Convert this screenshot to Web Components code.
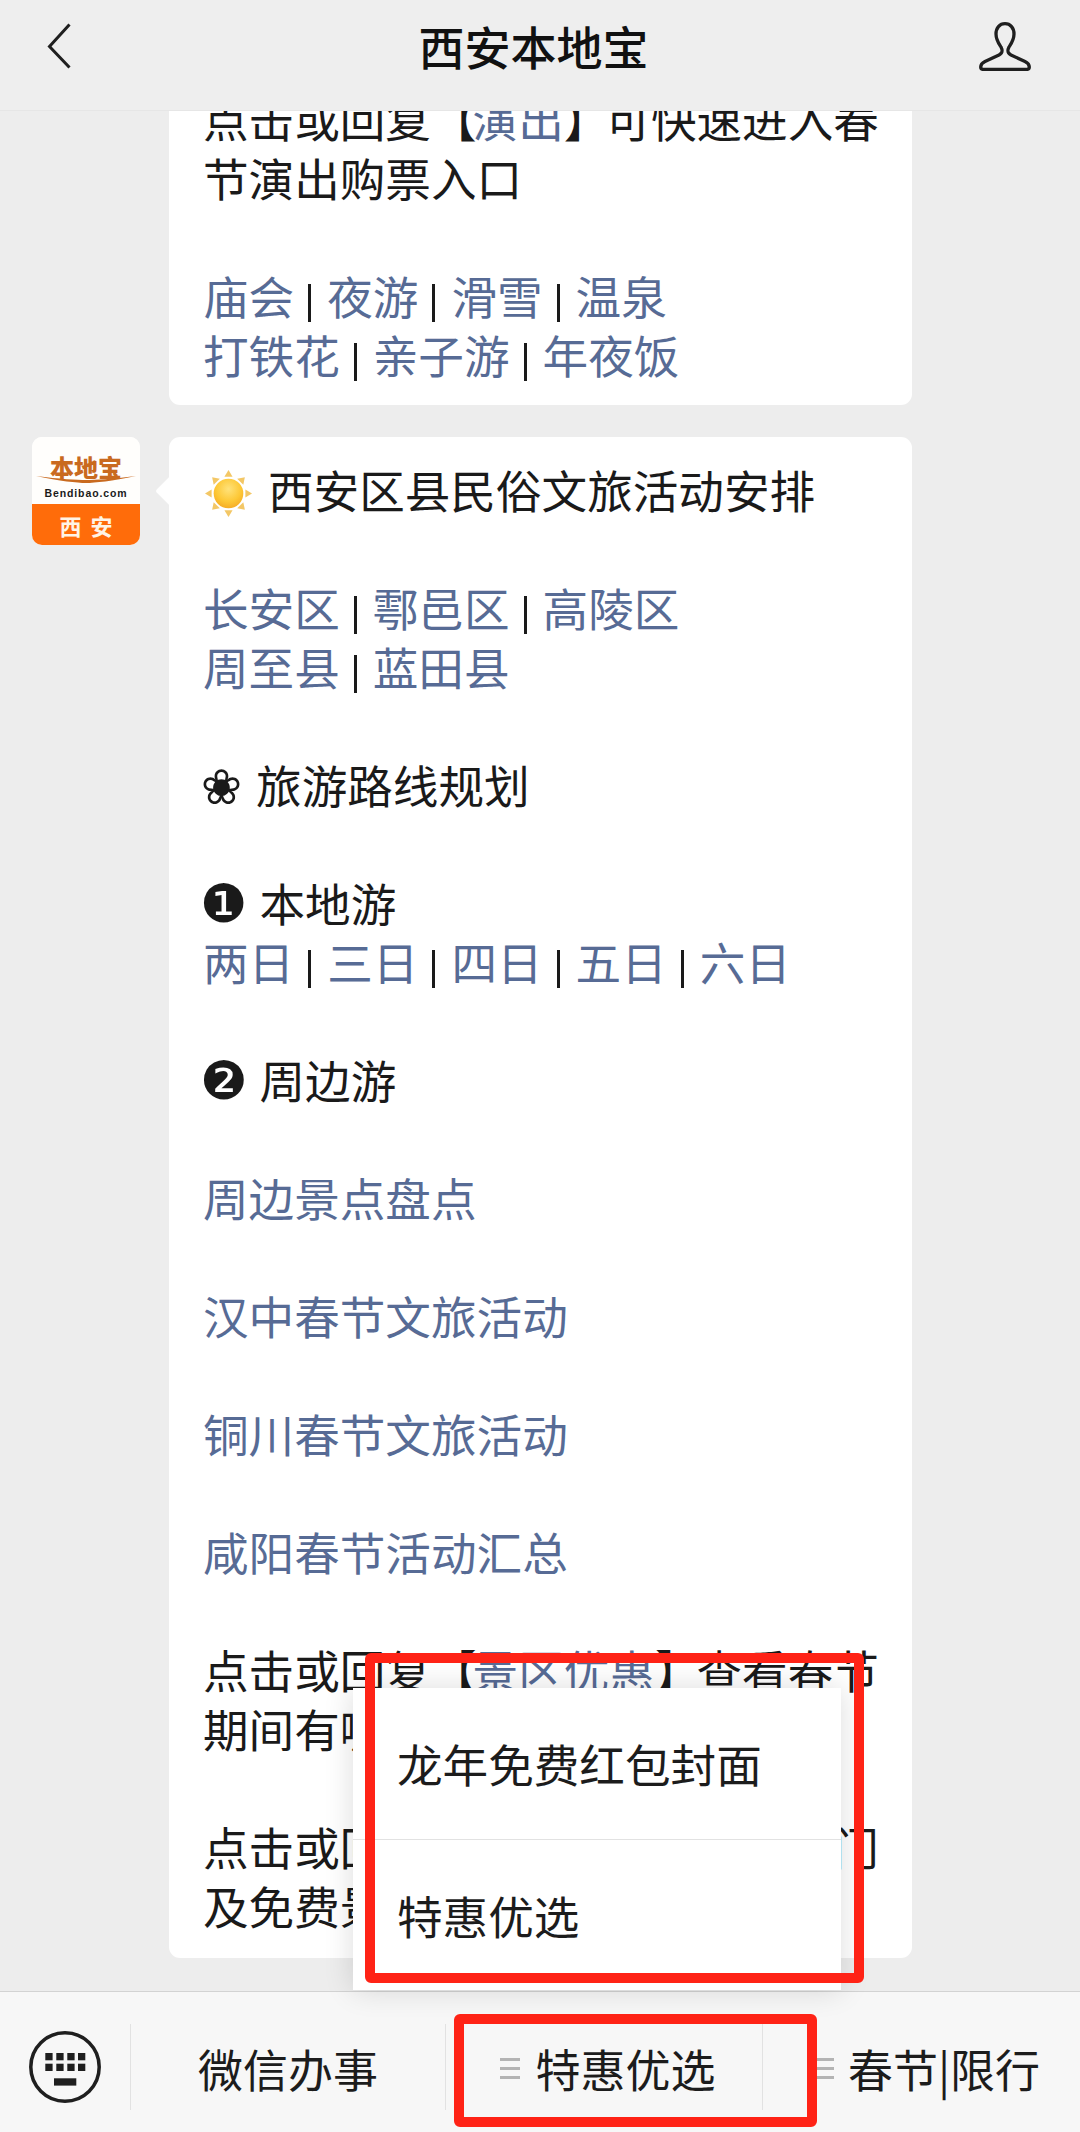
<!DOCTYPE html>
<html lang="zh"><head><meta charset="utf-8"><title>西安本地宝</title>
<style>
html,body{margin:0;padding:0;background:#ededed}
body{font-family:"Noto Sans CJK SC","Noto Sans",sans-serif;color:#1a1a1a}
</style></head><body>
<app-shell>
  <nav-bar slot="nav">西安本地宝</nav-bar>
  <chat-msg slot="chat" top>
    <msg-par>点击或回复<msg-punct>【</msg-punct><msg-link>演出</msg-link><msg-punct>】</msg-punct>可快速进入春节演出购票入口</msg-par>
    <msg-par><msg-link>庙会</msg-link><msg-pipe></msg-pipe><msg-link>夜游</msg-link><msg-pipe></msg-pipe><msg-link>滑雪</msg-link><msg-pipe></msg-pipe><msg-link>温泉</msg-link><br><msg-link>打铁花</msg-link><msg-pipe></msg-pipe><msg-link>亲子游</msg-link><msg-pipe></msg-pipe><msg-link>年夜饭</msg-link></msg-par>
  </chat-msg>
  <chat-msg slot="chat" avatar>
    <msg-par><sun-icon></sun-icon>西安区县民俗文旅活动安排</msg-par>
    <msg-par><msg-link>长安区</msg-link><msg-pipe></msg-pipe><msg-link>鄠邑区</msg-link><msg-pipe></msg-pipe><msg-link>高陵区</msg-link><br><msg-link>周至县</msg-link><msg-pipe></msg-pipe><msg-link>蓝田县</msg-link></msg-par>
    <msg-par><msg-glyph kind="flower">❀</msg-glyph>旅游路线规划</msg-par>
    <msg-par><msg-glyph>❶</msg-glyph>本地游<br><msg-link>两日</msg-link><msg-pipe></msg-pipe><msg-link>三日</msg-link><msg-pipe></msg-pipe><msg-link>四日</msg-link><msg-pipe></msg-pipe><msg-link>五日</msg-link><msg-pipe></msg-pipe><msg-link>六日</msg-link></msg-par>
    <msg-par><msg-glyph>❷</msg-glyph>周边游</msg-par>
    <msg-par><msg-link>周边景点盘点</msg-link></msg-par>
    <msg-par><msg-link>汉中春节文旅活动</msg-link></msg-par>
    <msg-par><msg-link>铜川春节文旅活动</msg-link></msg-par>
    <msg-par><msg-link>咸阳春节活动汇总</msg-link></msg-par>
    <msg-par>点击或回复<msg-punct>【</msg-punct><msg-link>景区优惠</msg-link><msg-punct>】</msg-punct>查看春节期间有哪些景区优惠</msg-par>
    <msg-par>点击或回复<msg-punct>【</msg-punct><msg-link>景区门票</msg-link><msg-punct>】</msg-punct>查询热门及免费景点</msg-par>
  </chat-msg>
  <composer-bar slot="bar"></composer-bar>
  <menu-popup slot="over"></menu-popup>
  <annot-box slot="over" style="left:365px;top:1653px;width:499px;height:330px"></annot-box>
  <annot-box slot="over" style="left:454px;top:2014px;width:363px;height:113px"></annot-box>
</app-shell>
<script>
function def(name, css, html, extra){
  customElements.define(name, class extends HTMLElement{
    constructor(){super();const r=this.attachShadow({mode:'open'});r.innerHTML='<style>'+css+'</style>'+html;}
    connectedCallback(){ if(extra) extra(this); }
  });
}
def('app-shell',
 `:host{display:block;position:relative;width:1080px;height:2132px;overflow:hidden;background:#ededed}
  .col{display:flex;flex-direction:column;height:100%}
  .chat{flex:1;min-height:0;overflow:hidden;display:flex;flex-direction:column;gap:32px}
  .nav{position:relative;z-index:2}`,
 `<div class="col"><div class="nav"><slot name="nav"></slot></div><div class="chat"><slot name="chat"></slot></div><slot name="bar"></slot></div><slot name="over"></slot>`);
def('nav-bar',
 `:host{display:flex;align-items:flex-start;justify-content:space-between;box-sizing:border-box;height:111px;padding:22px 49px 0 47px;background:#eeeeee;border-bottom:1px solid #e6e6e6}
  svg{display:block;flex:none}
  .t{font-size:46px;font-weight:500;line-height:46px;color:#111;margin:0 0 0 17px}`,
 `<svg width="24" height="48" viewBox="0 0 24 48" fill="none" stroke="#1f1f1f" stroke-width="3"><path d="M22.5 2.5 2.5 24.5l20 21"/></svg>
  <div class="t"><slot></slot></div>
  <svg width="52" height="49" viewBox="0 0 52 49" fill="none" stroke="#1f1f1f" stroke-width="3.3" stroke-linejoin="round"><path d="M26 1.700C20.500 1.700 17 6 17 12C17 18 20 22 22 25C24 29 23.500 31 20 33L6 39.500C3 41 1.700 43 1.700 45C1.700 47 3 47.500 5 47.500H47C49 47.500 50.300 47 50.300 45C50.300 43 49 41 46 39.500L32 33C28.500 31 28 29 30 25C32 22 35 18 35 12C35 6 31.500 1.700 26 1.700Z"/></svg>`);
def('chat-msg',
 `:host{display:flex;flex:none;align-items:flex-start;gap:29px;padding-left:32px}
  :host([top]){margin-top:-22px}
  .side{width:108px;flex:none}
  .bubble{position:relative;box-sizing:border-box;width:743px;flex:none;background:#fff;border-radius:11px;padding:23px 24px 23px 34px;font-size:45.600px;line-height:59px}
  .tail{position:absolute;left:-9px;top:42px;width:24px;height:24px;background:#fff;transform:rotate(45deg);border-radius:3px;display:none}
  :host([avatar]) .tail{display:block}
  :host([top]) .bubble{padding-top:0;padding-bottom:21px;border-radius:0 0 11px 11px}`,
 `<div class="side"></div><div class="bubble"><div class="tail"></div><slot></slot></div>`,
 el=>{ if(el.hasAttribute('avatar')){const s=el.shadowRoot.querySelector('.side'); if(!s.firstChild) s.appendChild(document.createElement('bdb-avatar'));} });
def('msg-par',
 `:host{display:block}
  :host(:not(:first-child)){margin-top:59px}`,`<slot></slot>`);
def('msg-link',`:host{color:#576b95}`,`<slot></slot>`);
def('msg-punct',`:host{margin-right:-4px}`,`<slot></slot>`);
def('msg-pipe',
 `:host{display:inline-block;width:3px;margin:0 16px 0 14px;height:38px;vertical-align:-7px;line-height:0}
  i{display:block;width:3px;height:38px;background:#1a1a1a}`,`<i></i>`);
def('msg-glyph',
 `:host{font-family:"DejaVu Sans",sans-serif;font-size:53px;line-height:0;margin:0 12px 0 -3px}
  :host([kind=flower]){font-size:49px;margin:0 14px 0 -2px}`,`<slot></slot>`);
def('sun-icon',
 `:host{display:inline-block;width:47px;height:47px;margin:0 16px 0 2px;vertical-align:-8px;line-height:0}
  svg{display:block}`,
 `<svg width="47" height="47" viewBox="0 0 46 46"><defs><radialGradient id="g" cx=".5" cy=".35" r=".7"><stop offset="0" stop-color="#ffe27a"/><stop offset=".6" stop-color="#fdc836"/><stop offset="1" stop-color="#f4a721"/></radialGradient></defs>
  <g fill="#f3c766"><path d="M23 0l4 6.500h-8z"/><path d="M23 46l-4-6.500h8z"/><path d="M0 23l6.500-4v8z"/><path d="M46 23l-6.500 4v-8z"/><path d="M7 7l7.500 1.500-6 6z"/><path d="M39 7l-1.500 7.500-6-6z"/><path d="M7 39l1.500-7.500 6 6z"/><path d="M39 39l-7.500-1.500 6-6z"/></g>
  <circle cx="23" cy="23" r="14.500" fill="url(#g)"/></svg>`);
def('bdb-avatar',
 `:host{display:flex;flex-direction:column;width:108px;height:108px;border-radius:10px;overflow:hidden;background:#fff}
  .top{height:67px;flex:none;display:flex;flex-direction:column;align-items:center;padding-top:17px;box-sizing:border-box;background:#fffefc}
  .cn{font:900 24px/25px "Noto Sans CJK SC",sans-serif;color:#c96a1f}
  svg{display:block;margin-top:-4px;flex:none}
  .en{font:700 10.500px/12px "Liberation Sans",sans-serif;color:#1a1a1a;letter-spacing:.9px;margin-top:3px}
  .bot{flex:1;background:#ff6c0a;color:#fff4e6;display:flex;align-items:center;justify-content:center;gap:9px;font:700 22px/1 "Noto Sans CJK SC",sans-serif}`,
 `<div class="top"><div class="cn">本地宝</div><svg width="102" height="9" viewBox="0 0 102 9"><path d="M1 1C25 6 42 8 51 8S77 6 101 1C77 4 60 5 51 5S25 4 1 1Z" fill="#c96a1f"/></svg><div class="en">Bendibao.com</div></div><div class="bot"><span>西</span><span>安</span></div>`);
def('composer-bar',
 `:host{display:flex;box-sizing:border-box;height:141px;flex:none;padding:32px 0 22px;background:#f7f7f7;border-top:1px solid #d3d3d3}
  .kb{width:131px;flex:none;display:flex;align-items:center;justify-content:flex-start;padding-left:29px;box-sizing:border-box;border-right:1px solid #e2e2e2}
  .cell{display:flex;align-items:center;justify-content:center;gap:15px;box-sizing:border-box;border-right:1px solid #e2e2e2;font-size:45px;color:#1c1c1c;padding-top:3px}
  .a{width:315px}.b{width:317px;padding-left:8px}.c{flex:1;border-right:0;padding-left:11px;gap:14px}
  .h{display:flex;flex-direction:column;gap:6px;flex:none}
  .h i{display:block;width:20px;height:3px;background:#b4b4b4}`,
 `<div class="kb"><svg width="72" height="72" viewBox="0 0 72 72"><circle cx="36" cy="36" r="34.200" fill="none" stroke="#1f1f1f" stroke-width="3.500"/><g fill="#1f1f1f"><rect x="16.300" y="22" width="7.300" height="7.300"/><rect x="27.300" y="22" width="7.300" height="7.300"/><rect x="38.300" y="22" width="7.300" height="7.300"/><rect x="49" y="22" width="7.300" height="7.300"/><rect x="16.300" y="32.700" width="7.300" height="7.300"/><rect x="27.300" y="32.700" width="7.300" height="7.300"/><rect x="38.300" y="32.700" width="7.300" height="7.300"/><rect x="49" y="32.700" width="7.300" height="7.300"/><rect x="25" y="47.300" width="22.300" height="7.300"/></g></svg></div>
  <div class="cell a">微信办事</div>
  <div class="cell b"><span class="h"><i></i><i></i><i></i></span>特惠优选</div>
  <div class="cell c"><span class="h"><i></i><i></i><i></i></span>春节|限行</div>`);
def('menu-popup',
 `:host{position:absolute;left:353px;top:1688px;width:488px;height:302px;background:#fff;box-shadow:0 0 28px rgba(0,0,0,.14);display:flex;flex-direction:column;font-size:45.600px;color:#1c1c1c}
  .it{flex:1;display:flex;align-items:center;padding-left:44px}
  .it+.it{border-top:1px solid #e2e2e2}`,
 `<div class="it">龙年免费红包封面</div><div class="it">特惠优选</div>`);
def('annot-box',
 `:host{position:absolute;box-sizing:border-box;border:10px solid #ff2316;border-radius:6px;pointer-events:none}`,``);
</script>
</body></html>
